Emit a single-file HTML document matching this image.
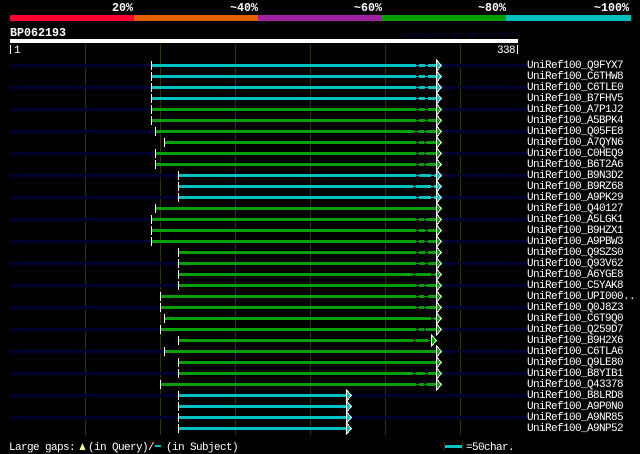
<!DOCTYPE html>
<html><head><meta charset="utf-8"><style>
html,body{margin:0;padding:0;background:#000;width:640px;height:454px;overflow:hidden}
svg{display:block}
text{font-family:"Liberation Mono",monospace;fill:#fff;white-space:pre}
.l{font-size:11px;letter-spacing:-.6px}
.h{font-size:11.67px;font-weight:bold}
</style></head><body>
<svg width="640" height="454" viewBox="0 0 640 454" xmlns="http://www.w3.org/2000/svg">
<g shape-rendering="crispEdges">
<rect x="10" y="15" width="124" height="6" fill="#ff0033"/><rect x="134" y="15" width="124" height="6" fill="#e06000"/><rect x="258" y="15" width="124" height="6" fill="#a020a0"/><rect x="382" y="15" width="124" height="6" fill="#00a000"/><rect x="506" y="15" width="125" height="6" fill="#00c0c0"/>
<rect x="10" y="39" width="508" height="4" fill="#fff"/>
<path d="M85.5 44V435M160.5 44V435M235.5 44V435M310.5 44V435M385.5 44V435M460.5 44V435" stroke="#333300" fill="none"/>
<path fill="none" stroke="#000033" stroke-width="3" d="M10 65.5H527M10 87.5H527M10 109.5H527M10 131.5H527M10 153.5H527M10 175.5H527M10 197.5H527M10 219.5H527M10 241.5H527M10 263.5H527M10 285.5H527M10 307.5H527M10 329.5H527M10 351.5H527M10 373.5H527M10 395.5H527M10 417.5H527"/>
<g fill="none" stroke="#00c0c0">
<path d="M151 65.5H436M151 76.5H436M151 87.5H436M151 98.5H436M178 175.5H436M178 186.5H436M178 197.5H436"/>
<path stroke-width="3" d="M151 65.5H416M419 65.5H425M428 65.5H436M151 76.5H416M419 76.5H425M428 76.5H436M151 87.5H416M419 87.5H425M428 87.5H436M151 98.5H416M419 98.5H425M428 98.5H436M178 175.5H416M419 175.5H431M434 175.5H436M178 186.5H413M416 186.5H431M434 186.5H436M178 197.5H416M419 197.5H431M434 197.5H436M178 395.5H346M178 406.5H346M178 417.5H346M178 428.5H346"/>
</g>
<g fill="none" stroke="#00a000">
<path d="M151 109.5H436M151 120.5H436M155 131.5H436M164 142.5H436M155 153.5H436M155 164.5H436M151 219.5H436M151 230.5H436M151 241.5H436M178 252.5H436M178 263.5H436M178 274.5H436M178 285.5H436M160 296.5H436M160 307.5H436M164 318.5H436M160 329.5H436M178 340.5H431M178 373.5H436M160 384.5H436"/>
<path stroke-width="3" d="M151 109.5H416M419 109.5H425M428 109.5H436M151 120.5H416M419 120.5H425M428 120.5H436M155 131.5H414M418 131.5H424M426 131.5H436M164 142.5H416M419 142.5H424M426 142.5H436M155 153.5H416M419 153.5H424M426 153.5H436M155 164.5H416M419 164.5H424M426 164.5H436M155 208.5H436M151 219.5H416M419 219.5H424M426 219.5H436M151 230.5H416M419 230.5H425M428 230.5H436M151 241.5H416M419 241.5H424M428 241.5H436M178 252.5H416M419 252.5H425M428 252.5H436M178 263.5H416M419 263.5H425M428 263.5H436M178 274.5H413M416 274.5H431M434 274.5H436M178 285.5H416M419 285.5H424M426 285.5H436M160 296.5H416M419 296.5H424M428 296.5H436M160 307.5H416M419 307.5H424M426 307.5H436M164 318.5H431M434 318.5H436M160 329.5H416M419 329.5H424M426 329.5H436M178 340.5H413M416 340.5H428M164 351.5H436M178 362.5H436M178 373.5H413M416 373.5H425M428 373.5H436M160 384.5H416M419 384.5H424M426 384.5H436"/>
</g>
<path fill="none" stroke="#fff" d="M151.5 61v9M151.5 72v9M151.5 83v9M151.5 94v9M151.5 105v9M151.5 116v9M155.5 127v9M164.5 138v9M155.5 149v9M155.5 160v9M178.5 171v9M178.5 182v9M178.5 193v9M155.5 204v9M151.5 215v9M151.5 226v9M151.5 237v9M178.5 248v9M178.5 259v9M178.5 270v9M178.5 281v9M160.5 292v9M160.5 303v9M164.5 314v9M160.5 325v9M178.5 336v9M164.5 347v9M178.5 358v9M178.5 369v9M160.5 380v9M178.5 391v9M178.5 402v9M178.5 413v9M178.5 424v9"/>
<path fill="none" stroke="#fff" d="M436.5 61v9M436.5 72v9M436.5 83v9M436.5 94v9M436.5 105v9M436.5 116v9M436.5 127v9M436.5 138v9M436.5 149v9M436.5 160v9M436.5 171v9M436.5 182v9M436.5 193v9M436.5 204v9M436.5 215v9M436.5 226v9M436.5 237v9M436.5 248v9M436.5 259v9M436.5 270v9M436.5 281v9M436.5 292v9M436.5 303v9M436.5 314v9M436.5 325v9M431.5 336v9M436.5 347v9M436.5 358v9M436.5 369v9M436.5 380v9M346.5 391v9M346.5 402v9M346.5 413v9M346.5 424v9"/>
<path fill="#00c0c0" stroke="#fff" transform="translate(-.5 0)" d="M437 60l5 5.5l-5 5.5zM437 71l5 5.5l-5 5.5zM437 82l5 5.5l-5 5.5zM437 93l5 5.5l-5 5.5zM437 170l5 5.5l-5 5.5zM437 181l5 5.5l-5 5.5zM437 192l5 5.5l-5 5.5zM347 390l5 5.5l-5 5.5zM347 401l5 5.5l-5 5.5zM347 412l5 5.5l-5 5.5zM347 423l5 5.5l-5 5.5z"/>
<path fill="#00a000" stroke="#fff" transform="translate(-.5 0)" d="M437 104l5 5.5l-5 5.5zM437 115l5 5.5l-5 5.5zM437 126l5 5.5l-5 5.5zM437 137l5 5.5l-5 5.5zM437 148l5 5.5l-5 5.5zM437 159l5 5.5l-5 5.5zM437 203l5 5.5l-5 5.5zM437 214l5 5.5l-5 5.5zM437 225l5 5.5l-5 5.5zM437 236l5 5.5l-5 5.5zM437 247l5 5.5l-5 5.5zM437 258l5 5.5l-5 5.5zM437 269l5 5.5l-5 5.5zM437 280l5 5.5l-5 5.5zM437 291l5 5.5l-5 5.5zM437 302l5 5.5l-5 5.5zM437 313l5 5.5l-5 5.5zM437 324l5 5.5l-5 5.5zM432 335l5 5.5l-5 5.5zM437 346l5 5.5l-5 5.5zM437 357l5 5.5l-5 5.5zM437 368l5 5.5l-5 5.5zM437 379l5 5.5l-5 5.5z"/>
<path d="M10.5 45v9M517.5 45v9" stroke="#fff" fill="none"/>
<path d="M82.5 443l3 7h-6z" fill="#ffff99"/>
<rect x="155" y="445" width="6" height="2" fill="#00c0c0"/>
<rect x="445" y="445" width="17" height="3" fill="#00c0c0"/>
<path d="M444.5 442v8M462.5 442v8" stroke="#333300" fill="none"/>
</g>
<text class="h" x="112" y="11">20%</text>
<text class="h" x="230" y="11">~40%</text>
<text class="h" x="354" y="11">~60%</text>
<text class="h" x="478" y="11">~80%</text>
<text class="h" x="594" y="11">~100%</text>
<text class="h" x="10" y="36">BP062193</text>
<text x="402" y="37" font-size="8.33" font-weight="bold" style="fill:#000033">AlignView.pm Beta rel.7</text>
<text class="l" x="14" y="53">1</text>
<text class="l" x="497" y="53">338</text>
<text class="l" x="527" y="68">UniRef100_Q9FYX7</text>
<text class="l" x="527" y="79">UniRef100_C6THW8</text>
<text class="l" x="527" y="90">UniRef100_C6TLE0</text>
<text class="l" x="527" y="101">UniRef100_B7FHV5</text>
<text class="l" x="527" y="112">UniRef100_A7P1J2</text>
<text class="l" x="527" y="123">UniRef100_A5BPK4</text>
<text class="l" x="527" y="134">UniRef100_Q05FE8</text>
<text class="l" x="527" y="145">UniRef100_A7QYN6</text>
<text class="l" x="527" y="156">UniRef100_C0HEQ9</text>
<text class="l" x="527" y="167">UniRef100_B6T2A6</text>
<text class="l" x="527" y="178">UniRef100_B9N3D2</text>
<text class="l" x="527" y="189">UniRef100_B9RZ68</text>
<text class="l" x="527" y="200">UniRef100_A9PK29</text>
<text class="l" x="527" y="211">UniRef100_Q40127</text>
<text class="l" x="527" y="222">UniRef100_A5LGK1</text>
<text class="l" x="527" y="233">UniRef100_B9HZX1</text>
<text class="l" x="527" y="244">UniRef100_A9PBW3</text>
<text class="l" x="527" y="255">UniRef100_Q9SZS0</text>
<text class="l" x="527" y="266">UniRef100_Q93V62</text>
<text class="l" x="527" y="277">UniRef100_A6YGE8</text>
<text class="l" x="527" y="288">UniRef100_C5YAK8</text>
<text class="l" x="527" y="299">UniRef100_UPI000..</text>
<text class="l" x="527" y="310">UniRef100_Q0J8Z3</text>
<text class="l" x="527" y="321">UniRef100_C6T9Q0</text>
<text class="l" x="527" y="332">UniRef100_Q259D7</text>
<text class="l" x="527" y="343">UniRef100_B9H2X6</text>
<text class="l" x="527" y="354">UniRef100_C6TLA6</text>
<text class="l" x="527" y="365">UniRef100_Q9LE80</text>
<text class="l" x="527" y="376">UniRef100_B8YIB1</text>
<text class="l" x="527" y="387">UniRef100_Q43378</text>
<text class="l" x="527" y="398">UniRef100_B8LRD8</text>
<text class="l" x="527" y="409">UniRef100_A9P0N0</text>
<text class="l" x="527" y="420">UniRef100_A9NR85</text>
<text class="l" x="527" y="431">UniRef100_A9NP52</text>
<text class="l" x="9" y="450">Large gaps:</text>
<text class="l" x="88" y="450">(in Query)/</text>
<text class="l" x="166" y="450">(in Subject)</text>
<text class="l" x="466" y="450">=50char.</text>
</svg>
</body></html>
